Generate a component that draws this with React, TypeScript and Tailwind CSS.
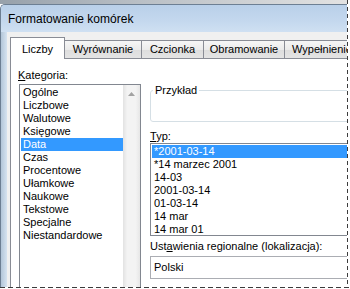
import React from 'react';

const cats = ['Ogólne', 'Liczbowe', 'Walutowe', 'Księgowe', 'Data', 'Czas', 'Procentowe', 'Ułamkowe', 'Naukowe', 'Tekstowe', 'Specjalne', 'Niestandardowe'];
const types = ['*2001-03-14', '*14 marzec 2001', '14-03', '2001-03-14', '01-03-14', '14 mar', '14 mar 01'];

function InactiveTab({ label, w, noLeft }: { label: string; w: string; noLeft?: boolean }) {
  return (
    <div
      className={`${w} h-[18px] shrink-0 border-t border-r ${noLeft ? '' : 'border-l'} border-[#898c95] bg-[linear-gradient(to_bottom,#f6f6f6,#ebebeb_50%,#dddddd_51%,#e4e4e4)] pt-[2px] text-center leading-[13px] whitespace-nowrap overflow-hidden`}
    >
      {label}
    </div>
  );
}

export default function App() {
  return (
    <div className="w-[350px] h-[289px] overflow-hidden bg-white flex flex-col font-['Liberation_Sans',Arial,sans-serif] text-[11px] text-black">
      <div className="flex h-[287px] shrink-0">
        {/* window */}
        <div className="w-[347px] shrink-0 flex flex-col overflow-hidden">
          <div className="h-[4px] shrink-0 bg-[linear-gradient(to_right,#97a1ab,#b9bfc5_40%,#e2e2e2)]" />
          <div className="flex-1 flex flex-col border-l border-t border-[#6d7f93] rounded-tl-[5px] bg-[#c8daee] overflow-hidden">
            <div className="h-[27px] shrink-0 flex items-center pl-[7px] text-[12px] bg-[linear-gradient(to_bottom,#b9d0e9,#c4d8ee_60%,#cfe0f2)]">
              Formatowanie komórek
            </div>
            <div className="flex-1 flex">
              <div className="w-[6px] shrink-0 bg-[linear-gradient(to_right,#b3c6d9,#d6e3f0)]" />
              <div className="flex-1 bg-[#f0f0f0] pt-[5px] pl-[3px] flex flex-col">
                {/* tabs */}
                <div className="h-[21px] shrink-0 flex items-end">
                  <div className="relative z-10 w-[55px] h-[22px] mb-[-1px] shrink-0 bg-white border-t border-l border-r border-[#898c95] pt-[5px] text-center leading-[13px]">
                    Liczby
                  </div>
                  <InactiveTab label="Wyrównanie" w="w-[77px]" noLeft />
                  <InactiveTab label="Czcionka" w="w-[62px]" noLeft />
                  <InactiveTab label="Obramowanie" w="w-[81px]" noLeft />
                  <InactiveTab label="Wypełnienie" w="w-[75px]" noLeft />
                </div>
                {/* panel */}
                <div className="flex-1 bg-white border-t border-l border-[#898c95] flex pl-[7px]">
                  {/* left column */}
                  <div className="w-[123px] shrink-0 flex flex-col pt-[10px]">
                    <div className="leading-[13px]">
                      <span className="underline underline-offset-[1px]">K</span>ategoria:
                    </div>
                    <div className="ml-[1px] mt-[2px] w-[122px] h-[215px] shrink-0 border border-[#828790] flex">
                      <div className="flex-1 pt-[1px] pl-[1px]">
                        {cats.map((c) => (
                          <div
                            key={c}
                            className={`h-[13px] leading-[13px] pl-[2px] whitespace-nowrap ${c === 'Data' ? 'bg-[#3399ff] text-white' : ''}`}
                          >
                            {c}
                          </div>
                        ))}
                      </div>
                      <div className="w-[17px] shrink-0 bg-[linear-gradient(to_right,#e2e2e2,#f3f3f3_25%,#f3f3f3_75%,#e6e6e6)] flex justify-center pt-[7px]">
                        <svg width="7" height="4" viewBox="0 0 7 4" className="block">
                          <path d="M3.5 0 L7 4 L0 4 Z" fill="#a2a2a2" />
                        </svg>
                      </div>
                    </div>
                  </div>
                  {/* right column */}
                  <div className="ml-[9px] w-[230px] shrink-0 flex flex-col pt-[25px]">
                    <fieldset className="border border-[#d5dfe5] rounded-[3px] p-0 m-0 min-w-0">
                      <legend className="ml-[2px] px-[2px] leading-[13px]">Przykład</legend>
                      <div className="h-[24px]" />
                    </fieldset>
                    <div className="mt-[8px] leading-[13px]">
                      <span className="underline underline-offset-[1px]">T</span>yp:
                    </div>
                    <div className="h-[93px] shrink-0 border border-[#828790] pt-[1px] pl-[1px] overflow-hidden">
                      {types.map((t, i) => (
                        <div
                          key={t}
                          className={`h-[13px] leading-[13px] pl-[2px] whitespace-nowrap ${i === 0 ? 'bg-[#3399ff] text-white' : ''}`}
                        >
                          {t}
                        </div>
                      ))}
                    </div>
                    <div className="mt-[4px] leading-[13px] whitespace-nowrap">
                      Ust<span className="underline underline-offset-[1px]">a</span>wienia regionalne (lokalizacja):
                    </div>
                    <div className="mt-[3px] h-[23px] shrink-0 border border-[#abadb3] bg-white flex items-center pl-[3px]">
                      Polski
                    </div>
                  </div>
                </div>
              </div>
            </div>
          </div>
        </div>
        {/* marquee right edge */}
        <div className="w-[1px] shrink-0 bg-[repeating-linear-gradient(to_bottom,#3c3c3c_0_4px,transparent_4px_7px)]" />
        <div className="flex-1 bg-white" />
      </div>
      {/* marquee bottom edge */}
      <div className="h-[1px] shrink-0 bg-[repeating-linear-gradient(to_right,#3c3c3c_0_5px,transparent_5px_8px)]" />
      <div className="flex-1 bg-white" />
    </div>
  );
}
